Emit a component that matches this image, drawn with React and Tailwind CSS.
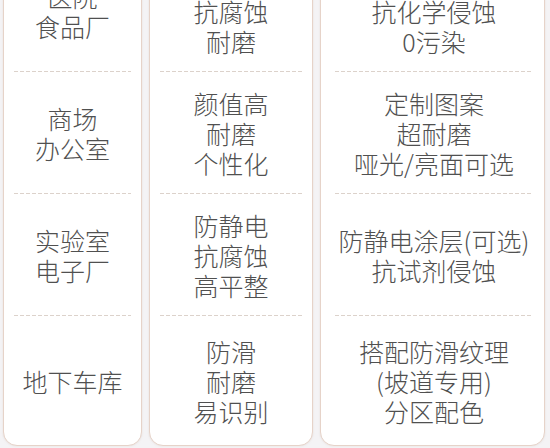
const columns = [
  {
    width: "w-[139px]",
    pad: "px-[10px]",
    rows: [
      ["医院", "食品厂"],
      ["商场", "办公室"],
      ["实验室", "电子厂"],
      ["地下车库"],
    ],
  },
  {
    width: "w-[164px]",
    pad: "px-[10px]",
    rows: [
      ["抗菌", "抗腐蚀", "耐磨"],
      ["颜值高", "耐磨", "个性化"],
      ["防静电", "抗腐蚀", "高平整"],
      ["防滑", "耐磨", "易识别"],
    ],
  },
  {
    width: "w-[225px]",
    pad: "pl-[14px] pr-[11px]",
    rows: [
      ["抗菌涂层", "抗化学侵蚀", "0污染"],
      ["定制图案", "超耐磨", "哑光/亮面可选"],
      ["防静电涂层(可选)", "抗试剂侵蚀"],
      ["搭配防滑纹理", "(坡道专用)", "分区配色"],
    ],
  },
];

function Divider() {
  return (
    <div className="h-px w-full bg-[repeating-linear-gradient(to_right,#dcd2cb_0_4px,transparent_4px_6px)]" />
  );
}

function Card({ col }) {
  return (
    <div
      className={`${col.width} shrink-0 rounded-[14px] border border-[#e6d3c9] bg-white ${col.pad} shadow-[0_0_2px_rgba(200,180,170,0.35)]`}
    >
      {col.rows.map((lines, i) => {
        const last = i === col.rows.length - 1;
        return (
          <div key={i}>
            <div
              className={`flex ${last ? "h-[129px]" : "h-[121px]"} flex-col items-center justify-center text-center`}
            >
              {lines.map((t) => (
                <div key={t} className="whitespace-nowrap">
                  {t}
                </div>
              ))}
            </div>
            {!last && <Divider />}
          </div>
        );
      })}
    </div>
  );
}

export default function App() {
  return (
    <main className="h-[448px] w-[550px] overflow-hidden bg-[#f4f3f5] font-['Noto_Sans_CJK_SC',sans-serif] text-[25px] font-light leading-[30px] text-[#505050]">
      <div className="-mt-[51px] flex gap-[7px] pl-[3px] pr-[5px]">
        {columns.map((col, i) => (
          <Card key={i} col={col} />
        ))}
      </div>
    </main>
  );
}
